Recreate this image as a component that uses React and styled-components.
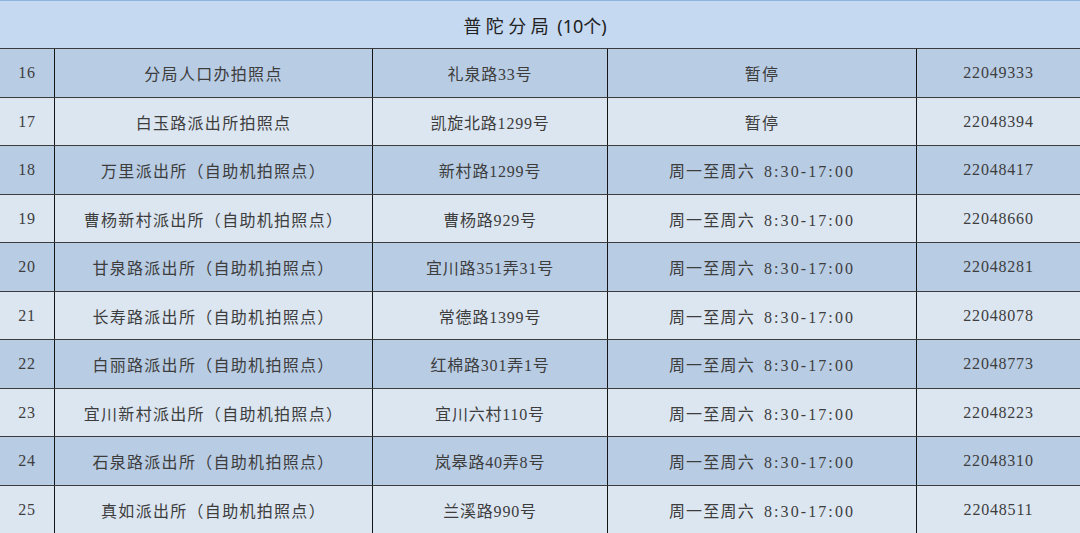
import React from "react";
import styled, { createGlobalStyle } from "styled-components";

const Global = createGlobalStyle`
  html, body { margin: 0; padding: 0; background: #ffffff; }
  #root { width: 1080px; height: 533px; }
`;

const Table = styled.div`
  width: 1080px;
  height: 533px;
  display: grid;
  grid-template-rows: 48px repeat(10, 1fr);
  overflow: hidden;
`;

const Title = styled.div`
  background: #c5d9f1;
  border-top: 1px solid #8db3e2;
  display: flex;
  align-items: center;
  justify-content: center;
  font-family: "Noto Sans", "Noto Sans CJK SC", sans-serif;
  font-size: 18px;
  color: #222;
  padding-top: 1px;
  padding-right: 10px;
`;

const TitleName = styled.span`
  letter-spacing: 4.5px;
  margin-right: 4px;
`;

const Row = styled.div`
  display: grid;
  grid-template-columns: 54px 318px 235px 309px 1fr;
  border-top: 1px solid #3c3c3c;
  background: ${(p) => (p.$dark ? "#b8cce4" : "#dce6f1")};
`;

const Cell = styled.div`
  display: flex;
  align-items: center;
  justify-content: center;
  border-left: ${(p) => (p.$first ? "none" : "1px solid #151515")};
  font-family: "Liberation Serif", "Noto Sans CJK SC", serif;
  font-size: 16px;
  letter-spacing: ${(p) => p.$ls || "0.8px"};
  color: #3d3d3d;
  white-space: nowrap;
  padding-top: 1px;
`;

const Hours = styled.span`
  letter-spacing: 1.2px;
  & > b {
    font-weight: normal;
    margin-left: 9px;
    letter-spacing: 2.1px;
  }
`;

const rows = [
  ["16", "分局人口办拍照点", "礼泉路33号", null, "22049333"],
  ["17", "白玉路派出所拍照点", "凯旋北路1299号", null, "22048394"],
  ["18", "万里派出所（自助机拍照点）", "新村路1299号", 1, "22048417"],
  ["19", "曹杨新村派出所（自助机拍照点）", "曹杨路929号", 1, "22048660"],
  ["20", "甘泉路派出所（自助机拍照点）", "宜川路351弄31号", 1, "22048281"],
  ["21", "长寿路派出所（自助机拍照点）", "常德路1399号", 1, "22048078"],
  ["22", "白丽路派出所（自助机拍照点）", "红棉路301弄1号", 1, "22048773"],
  ["23", "宜川新村派出所（自助机拍照点）", "宜川六村110号", 1, "22048223"],
  ["24", "石泉路派出所（自助机拍照点）", "岚皋路40弄8号", 1, "22048310"],
  ["25", "真如派出所（自助机拍照点）", "兰溪路990号", 1, "22048511"],
];

export default function App() {
  return (
    <>
      <Global />
      <Table>
        <Title>
          <TitleName>普陀分局</TitleName>(10个)
        </Title>
        {rows.map((r, i) => (
          <Row key={r[0]} $dark={i % 2 === 0}>
            <Cell $first>{r[0]}</Cell>
            <Cell $ls="1.3px">{r[1]}</Cell>
            <Cell>{r[2]}</Cell>
            <Cell>
              {r[3] ? (
                <Hours>
                  周一至周六<b>8:30-17:00</b>
                </Hours>
              ) : (
                <Hours>暂停</Hours>
              )}
            </Cell>
            <Cell>{r[4]}</Cell>
          </Row>
        ))}
      </Table>
    </>
  );
}
